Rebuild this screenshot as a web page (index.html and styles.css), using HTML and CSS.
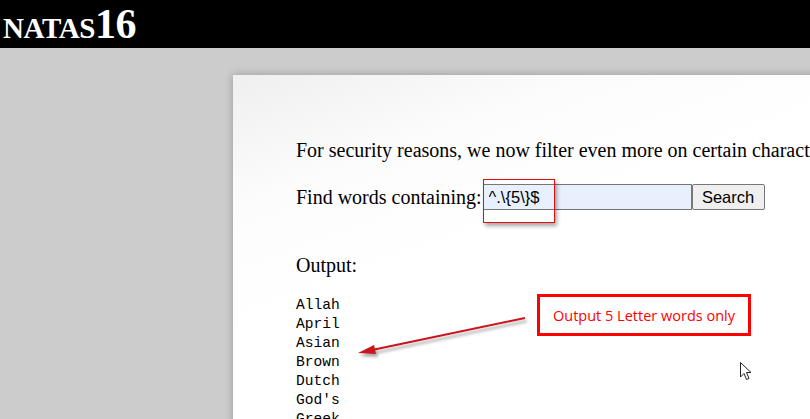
FILE: index.html
```html
<!DOCTYPE html>
<html>
<head>
<meta charset="utf-8">
<link rel="stylesheet" href="styles.css">
</head>
<body>
<header class="top"><h1 class="title">natas16</h1></header>
<main class="stage">
  <div class="card">
    <p class="intro">For security reasons, we now filter even more on certain characters</p>
    <form class="search">
      <label class="search-label">Find words containing:</label>
      <span class="field-wrap">
        <input class="field" type="text" value="^.\{5\}$">
        <span class="highlight"></span>
      </span>
      <button class="btn" type="button">Search</button>
    </form>
    <p class="output-label">Output:</p>
<pre class="words">Allah
April
Asian
Brown
Dutch
God's
Greek</pre>
  </div>
</main>
<div class="note">Output 5 Letter words only</div>
<svg class="arrow" width="200" height="60" viewBox="0 0 200 60">
  <defs>
    <filter id="sh" x="-20%" y="-50%" width="140%" height="200%">
      <feDropShadow dx="2" dy="3" stdDeviation="1.5" flood-color="#000" flood-opacity="0.35"/>
    </filter>
  </defs>
  <g filter="url(#sh)">
    <line x1="175" y1="8" x2="22" y2="40" stroke="#c8141c" stroke-width="2"/>
    <polygon points="8,43 24,35 26,44" fill="#c8141c"/>
  </g>
</svg>
<svg class="cursor" width="16" height="22" viewBox="0 0 16 22">
  <path d="M1.5 1.5 L1.5 16 L5 12.5 L7.5 18.5 L10 17.5 L7.5 11.5 L12 11.5 Z" fill="#fff" stroke="#222" stroke-width="1"/>
</svg>
</body>
</html>
```

FILE: styles.css
```css
html, body {
  margin: 0;
  padding: 0;
  background: #cccccc;
  height: 100%;
  overflow: hidden;
}

.top {
  background: #000;
  height: 48px;
  display: flex;
  align-items: center;
}

.title {
  margin: 0 0 0 3px;
  color: #fff;
  font-family: "Liberation Serif", serif;
  font-variant: small-caps;
  font-weight: bold;
  font-size: 42px;
  line-height: 40px;
  letter-spacing: -0.4px;
}

.stage {
  padding: 27px 0 0 233px;
}

.card {
  background: linear-gradient(160deg, #efefef 0%, #fcfcfc 18%, #ffffff 35%);
  box-shadow: 0 0 8px rgba(0, 0, 0, 0.25);
  width: 700px;
  height: 400px;
  padding: 64px 0 0 63px;
  font-family: "Liberation Serif", serif;
  font-size: 20px;
  color: #000;
  white-space: nowrap;
  overflow: hidden;
}

.intro {
  margin: 0;
  line-height: 23px;
}

.search {
  margin: 22px 0 0 0;
  display: flex;
  align-items: center;
  height: 26px;
}

.search-label {
  line-height: 23px;
  margin-right: 1px;
}

.field-wrap {
  position: relative;
  display: flex;
}

.field {
  box-sizing: border-box;
  width: 209px;
  height: 26px;
  margin: 0;
  padding: 1px 5px;
  background: #e8f0fe;
  border: 1px solid #767676;
  font-family: "Liberation Sans", sans-serif;
  font-size: 16.5px;
  color: #000;
}

.highlight {
  position: absolute;
  left: 0;
  top: -5px;
  width: 72px;
  height: 44px;
  box-sizing: border-box;
  border: 1px solid #e01010;
  box-shadow: 2px 3px 4px rgba(0, 0, 0, 0.35);
}

.btn {
  box-sizing: border-box;
  height: 26px;
  width: 73px;
  margin: 0;
  padding: 0;
  background: #efefef;
  border: 1px solid #767676;
  border-radius: 2px;
  font-family: "Liberation Sans", sans-serif;
  font-size: 16.5px;
  color: #000;
}

.output-label {
  margin: 44px 0 0 0;
  line-height: 23px;
}

.words {
  margin: 19px 0 0 0;
  font-family: "Liberation Mono", monospace;
  font-size: 14.6px;
  line-height: 19px;
  color: #000;
}

.note {
  position: absolute;
  left: 537px;
  top: 294px;
  width: 214px;
  height: 42px;
  box-sizing: border-box;
  border: 3px solid #ff0000;
  background: #fff;
  display: flex;
  align-items: center;
  justify-content: center;
  font-family: "Open Sans", "Liberation Sans", sans-serif;
  font-size: 14.5px;
  color: #ff0000;
}

.arrow {
  position: absolute;
  left: 350px;
  top: 310px;
}

.cursor {
  position: absolute;
  left: 739px;
  top: 361px;
}
```
